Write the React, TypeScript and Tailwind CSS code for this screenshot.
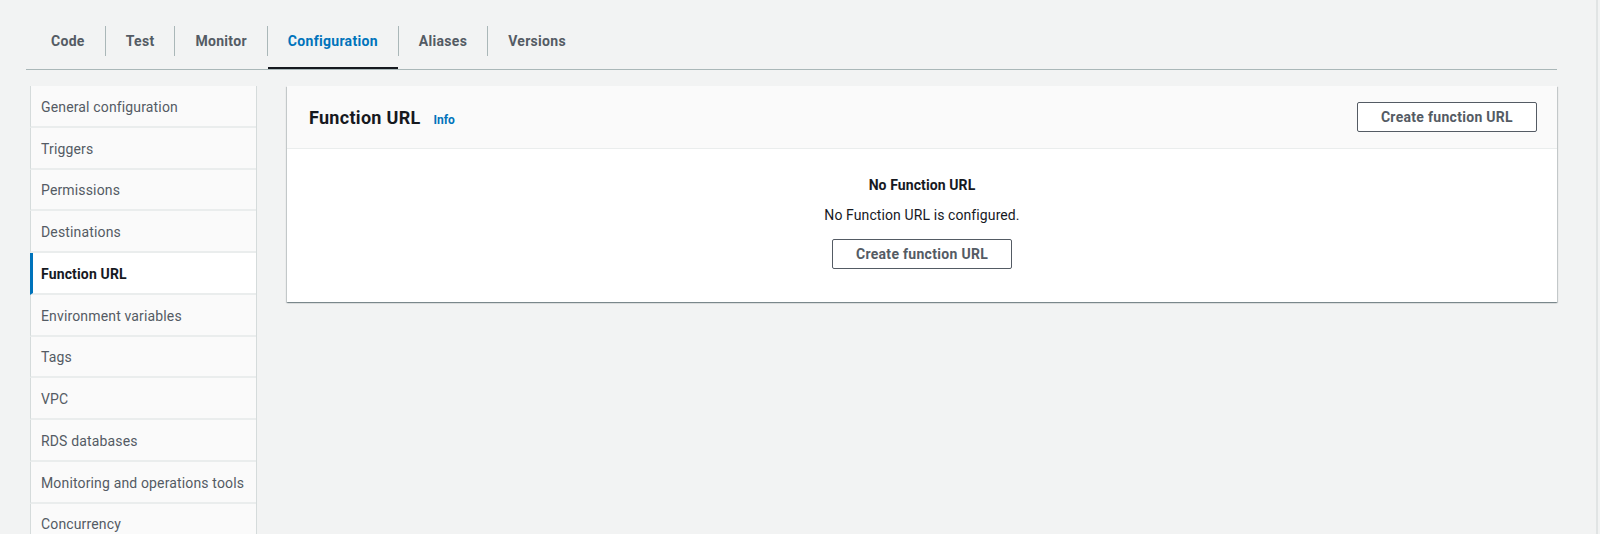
import React from "react";

const tabs = ["Code", "Test", "Monitor", "Configuration", "Aliases", "Versions"];

const navItems = [
  "General configuration",
  "Triggers",
  "Permissions",
  "Destinations",
  "Function URL",
  "Environment variables",
  "Tags",
  "VPC",
  "RDS databases",
  "Monitoring and operations tools",
  "Concurrency",
];

function Tabs({ active }: { active: string }) {
  return (
    <div className="flex pl-[5px] pt-[26px] border-b border-[#aab7b8]">
      {tabs.map((tab, i) => {
        const isActive = tab === active;
        return (
          <React.Fragment key={tab}>
            {i > 0 && <div className="w-px h-[30px] bg-[#aab7b8]" />}
            <div className="flex flex-col">
              <div
                className={
                  "h-[30px] px-5 flex items-center text-[14px] font-bold tracking-[0.3px] " +
                  (isActive ? "text-[#0073bb]" : "text-[#545b64]")
                }
              >
                {tab}
              </div>
              <div className="h-[11px]" />
              <div className={"h-[2px] " + (isActive ? "bg-[#16191f]" : "")} />
            </div>
          </React.Fragment>
        );
      })}
    </div>
  );
}

function SideNav({ active }: { active: string }) {
  return (
    <div className="w-[227px] shrink-0 bg-[#fafafa] border-r border-[#d5dbdb] h-[448px] overflow-hidden">
      {navItems.map((item) => {
        const isActive = item === active;
        return (
          <div
            key={item}
            className={
              "h-[41.75px] flex items-center pt-[3px] border-b-2 border-b-[#eaeded] text-[14px] tracking-[0.15px] " +
              (isActive
                ? "bg-white border-l-[3px] border-l-[#0073bb] pl-[8px] font-bold text-[#16191f]"
                : "border-l border-l-[#d5dbdb] pl-[10px] text-[#545b64]")
            }
          >
            {item}
          </div>
        );
      })}
    </div>
  );
}

function OutlineButton({ children }: { children: React.ReactNode }) {
  return (
    <button className="h-[30px] px-[23px] border border-[#545b64] rounded-[2px] bg-white text-[14px] font-bold tracking-[0.3px] text-[#545b64] leading-none">
      {children}
    </button>
  );
}

function FunctionUrlPanel() {
  return (
    <div className="flex-1 self-start bg-white shadow-[0_1px_1px_0_rgba(0,28,36,0.3),1px_1px_1px_0_rgba(0,28,36,0.15),-1px_1px_1px_0_rgba(0,28,36,0.15)]">
      <div className="h-[63px] bg-[#fafafa] border-b border-[#eaeded] flex items-center justify-between px-5">
        <div className="flex items-baseline pl-[2px]">
          <h2 className="text-[18px] font-bold tracking-[0.3px] text-[#16191f]">Function URL</h2>
          <a className="ml-[13px] text-[12px] font-bold text-[#0073bb]">Info</a>
        </div>
        <OutlineButton>Create function URL</OutlineButton>
      </div>
      <div className="flex flex-col items-center pt-[26px] pb-[33px] tracking-[0.1px]">
        <div className="text-[14px] leading-[20px] font-bold text-[#16191f]">No Function URL</div>
        <div className="mt-[10px] text-[14px] leading-[20px] text-[#16191f]">
          No Function URL is configured.
        </div>
        <div className="mt-[14px]">
          <OutlineButton>Create function URL</OutlineButton>
        </div>
      </div>
    </div>
  );
}

export default function App() {
  return (
    <div
      className="flex w-[1600px] h-[534px] bg-[#f2f3f3] overflow-hidden"
      style={{ fontFamily: "Roboto, 'Open Sans', Arial, sans-serif" }}
    >
      <div className="w-[1557px] pl-[26px]">
        <Tabs active="Configuration" />
        <div className="flex gap-[30px] pl-[4px] pt-[16px]">
          <SideNav active="Function URL" />
          <FunctionUrlPanel />
        </div>
      </div>
      <div className="flex-1" />
      <div className="w-[2px] h-full bg-[#e1e4e4]" />
      <div className="w-[2px]" />
    </div>
  );
}
